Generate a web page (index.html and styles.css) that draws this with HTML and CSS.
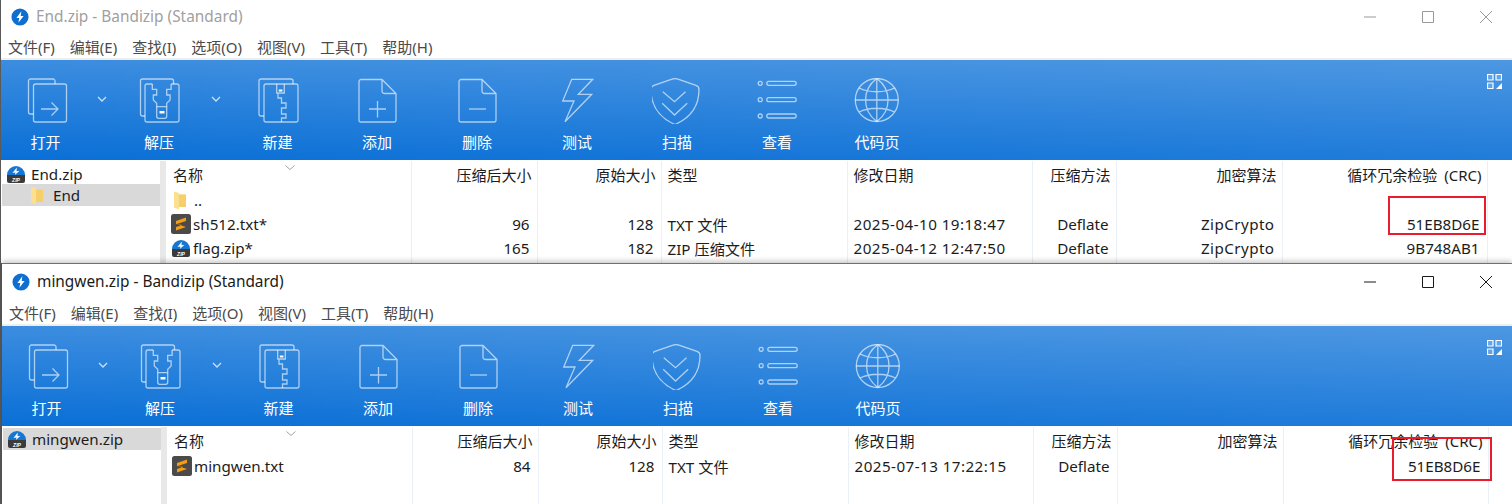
FILE: index.html
```html
<!DOCTYPE html>
<html lang="zh">
<head>
<meta charset="utf-8">
<title>Bandizip</title>
<link rel="stylesheet" href="styles.css">
</head>
<body>
<svg class="defs" xmlns="http://www.w3.org/2000/svg">
  <symbol id="i-app" viewBox="0 0 20 20"><circle cx="10" cy="10" r="9.500" fill="#0f6fd0"/><path d="M11.500 3.500 6 11h3.200l-1 5.500L14 9h-3.200z" fill="#fff"/></symbol>
  <symbol id="i-zip" viewBox="0 0 20 20"><path d="M1 11a9 9 0 0 1 18 0z" fill="#1677d2"/><path d="M10.800 3.500 6.500 9l3-.6-.6 2.600L13.500 6.800l-3 .5z" fill="#fff"/><path d="M1 11h18v6a2 2 0 0 1-2 2H3a2 2 0 0 1-2-2z" fill="#3b3b3b"/><text x="10" y="17.500" class="ziptext">ZIP</text></symbol>
  <symbol id="i-sub" viewBox="0 0 20 20"><rect width="20" height="20" rx="2.500" fill="#4a4a4a"/><path d="M15 3.600v3.300L5 10.200V7z" fill="#f59d12"/><path d="M5 9.800 15 13 5 16.400v-3.300l6-2z" fill="#f59d12"/></symbol>
  <symbol id="i-folder" viewBox="0 0 14 20"><path d="M1 1.500 6 3v1.500h7V17H6v2.500L1 17.500z" fill="#fbe08f"/><path d="M6 4.500h7V17H6z" fill="#f6cf6c"/></symbol>

  <symbol id="t-open" viewBox="0 0 50 46"><path d="M34 6V3a2 2 0 0 0-2-2H9.500a2 2 0 0 0-2 2v31a2 2 0 0 0 2 2h3"/><rect x="12.500" y="6" width="33" height="38" rx="2"/><path d="M20 31h17M30.500 24.500 37 31l-6.500 6.500"/></symbol>
  <symbol id="t-extract" viewBox="0 0 50 46"><path d="M11 38H8.500a2 2 0 0 1-2-2V3a2 2 0 0 1 2-2h29a2 2 0 0 1 2 2v3"/><path d="M18.300 6H13a2 2 0 0 0-2 2v34a2 2 0 0 0 2 2h30a2 2 0 0 0 2-2V8a2 2 0 0 0-2-2h-5.900"/><path d="M18.300 6v5.300h4.400V17h-3.400v5l3.400 3.300v3.400h10v-3.400l3.400-3.300v-5h-3.400v-5.700h4.400V6"/><path d="M22.700 28.700v9.600a2 2 0 0 0 2 2h6a2 2 0 0 0 2-2v-9.600"/><rect x="25.500" y="33" width="5" height="2.500" fill="#fff" stroke="none"/></symbol>
  <symbol id="t-new" viewBox="0 0 50 46"><path d="M11 38H8a2 2 0 0 1-2-2V3a2 2 0 0 1 2-2h30a2 2 0 0 1 2 2v3"/><path d="M11 42V8a2 2 0 0 1 2-2h30a2 2 0 0 1 2 2v34a2 2 0 0 1-2 2H13a2 2 0 0 1-2-2z"/><path d="M23.700 6v9h7.600V6M25 15v5h3.500v5H33v5h-4.500v6H33v4h-4.500v4"/><rect x="25.800" y="11.500" width="3.600" height="2" fill="#fff" stroke="none"/></symbol>
  <symbol id="t-add" viewBox="0 0 50 46"><path d="M30 1.500H9a2 2 0 0 0-2 2v38.500a2 2 0 0 0 2 2h33a2 2 0 0 0 2-2V15.500zM30 1.500V13a2.500 2.500 0 0 0 2.500 2.500H44"/><path d="M25.500 23v16.500M17 31h17"/></symbol>
  <symbol id="t-del" viewBox="0 0 50 46"><path d="M30 1.500H9a2 2 0 0 0-2 2v38.500a2 2 0 0 0 2 2h33a2 2 0 0 0 2-2V15.500zM30 1.500V13a2.500 2.500 0 0 0 2.500 2.500H44"/><path d="M17 31h17"/></symbol>
  <symbol id="t-test" viewBox="0 0 50 46"><path d="M19.700 1.300H40.700L26.300 16.300H39.700L13 43.700 22 23H10.700z"/></symbol>
  <symbol id="t-scan" viewBox="0 0 50 46"><path d="M23 .6c-1 0-2 .2-3 .6L2 7.400C-.2 8.200-1 9.500-1 11.500-1 28 8 40 23 46.500 38 40 47 28 47 11.500c0-2-.8-3.300-3-4.100L26 1.200c-1-.4-2-.6-3-.6z"/><path d="M10.800 13.700 22.500 23.700 33.500 13.700M10.200 25.300 22.500 37 35.200 25.300"/></symbol>
  <symbol id="t-view" viewBox="0 0 50 46"><circle cx="8.200" cy="5.300" r="2"/><circle cx="8.200" cy="21.700" r="2"/><circle cx="8.200" cy="38" r="2"/><rect x="14.800" y="3.300" width="29.400" height="4" rx="2"/><rect x="14.800" y="19.700" width="29.400" height="4" rx="2"/><rect x="14.800" y="36" width="29.400" height="4" rx="2"/></symbol>
  <symbol id="t-code" viewBox="0 0 50 46"><circle cx="24.800" cy="22" r="21.500"/><path d="M24.800.5v43M3.300 22h43M24.800.5c-15 11-15 32 0 43M24.800.5c15 11 15 32 0 43M7 10c10 5 25.600 5 35.600 0M7 34c10-5 25.600-5 35.600 0"/></symbol>
  <symbol id="t-apps" viewBox="0 0 15 15"><path d="M.5.500h5.500v5.500H.5zM9 .500h5.500v5.500H9zM.5 9h5.500v5.500H.5z" fill="rgba(120,190,255,.45)"/><path d="M15 9v6H9z" fill="#fff" stroke="none"/></symbol>
</svg>

<section class="window window-back">
  <header class="titlebar">
    <svg class="app-icon"><use href="#i-app"/></svg>
    <span class="title">End.zip - Bandizip (Standard)</span>
    <div class="controls">
      <svg class="ctl" viewBox="0 0 12 12"><path d="M0 6h12"/></svg>
      <svg class="ctl" viewBox="0 0 12 12"><path d="M.5.500h11v11H.5z"/></svg>
      <svg class="ctl" viewBox="0 0 12 12"><path d="M0 0l12 12M12 0 0 12"/></svg>
    </div>
  </header>
  <nav class="menu"><span>文件(F)</span><span>编辑(E)</span><span>查找(I)</span><span>选项(O)</span><span>视图(V)</span><span>工具(T)</span><span>帮助(H)</span></nav>
  <div class="toolbar">
    <div class="tool tool-open"><svg class="tool-icon"><use href="#t-open"/></svg><span>打开</span></div>
    <div class="drop"><svg viewBox="0 0 10 6"><path d="M1 1l4 4 4-4"/></svg></div>
    <div class="tool tool-extract"><svg class="tool-icon"><use href="#t-extract"/></svg><span>解压</span></div>
    <div class="drop"><svg viewBox="0 0 10 6"><path d="M1 1l4 4 4-4"/></svg></div>
    <div class="tool tool-new"><svg class="tool-icon"><use href="#t-new"/></svg><span>新建</span></div>
    <div class="tool"><svg class="tool-icon"><use href="#t-add"/></svg><span>添加</span></div>
    <div class="tool"><svg class="tool-icon"><use href="#t-del"/></svg><span>删除</span></div>
    <div class="tool"><svg class="tool-icon"><use href="#t-test"/></svg><span>测试</span></div>
    <div class="tool"><svg class="tool-icon"><use href="#t-scan"/></svg><span>扫描</span></div>
    <div class="tool"><svg class="tool-icon"><use href="#t-view"/></svg><span>查看</span></div>
    <div class="tool"><svg class="tool-icon"><use href="#t-code"/></svg><span>代码页</span></div>
    <svg class="apps"><use href="#t-apps"/></svg>
  </div>
  <div class="body">
    <aside class="tree">
      <div class="node"><svg class="file-icon"><use href="#i-zip"/></svg><span>End.zip</span></div>
      <div class="node node-sel node-child"><svg class="folder-icon"><use href="#i-folder"/></svg><span>End</span></div>
    </aside>
    <div class="splitter"></div>
    <div class="list">
      <svg class="sort" viewBox="0 0 10 5"><path d="M.5.500 5 4.500 9.500.500"/></svg>
      <table>
        <colgroup><col class="c1"><col class="c2"><col class="c3"><col class="c4"><col class="c5"><col class="c6"><col class="c7"><col class="c8"><col></colgroup>
        <thead><tr><th class="l name-h">名称</th><th>压缩后大小</th><th>原始大小</th><th class="l">类型</th><th class="l">修改日期</th><th>压缩方法</th><th>加密算法</th><th>循环冗余检验 (CRC)</th><th></th></tr></thead>
        <tbody>
          <tr><td class="l"><span class="fname"><svg class="folder-icon in-list"><use href="#i-folder"/></svg>..</span></td><td></td><td></td><td></td><td></td><td></td><td></td><td></td><td></td></tr>
          <tr><td class="l"><span class="fname"><svg class="file-icon"><use href="#i-sub"/></svg>sh512.txt*</span></td><td>96</td><td>128</td><td class="l">TXT 文件</td><td class="l date">2025-04-10 19:18:47</td><td>Deflate</td><td class="crypto">ZipCrypto</td><td>51EB8D6E</td><td></td></tr>
          <tr><td class="l"><span class="fname"><svg class="file-icon"><use href="#i-zip"/></svg>flag.zip*</span></td><td>165</td><td>182</td><td class="l">ZIP 压缩文件</td><td class="l date">2025-04-12 12:47:50</td><td>Deflate</td><td class="crypto">ZipCrypto</td><td>9B748AB1</td><td></td></tr>
          <tr class="filler"><td></td><td></td><td></td><td></td><td></td><td></td><td></td><td></td><td></td></tr>
        </tbody>
      </table>
      <div class="mark mark-back"></div>
    </div>
  </div>
</section>

<section class="window window-front">
  <header class="titlebar">
    <svg class="app-icon"><use href="#i-app"/></svg>
    <span class="title">mingwen.zip - Bandizip (Standard)</span>
    <div class="controls">
      <svg class="ctl" viewBox="0 0 12 12"><path d="M0 6h12"/></svg>
      <svg class="ctl" viewBox="0 0 12 12"><path d="M.5.500h11v11H.5z"/></svg>
      <svg class="ctl" viewBox="0 0 12 12"><path d="M0 0l12 12M12 0 0 12"/></svg>
    </div>
  </header>
  <nav class="menu"><span>文件(F)</span><span>编辑(E)</span><span>查找(I)</span><span>选项(O)</span><span>视图(V)</span><span>工具(T)</span><span>帮助(H)</span></nav>
  <div class="toolbar">
    <div class="tool tool-open"><svg class="tool-icon"><use href="#t-open"/></svg><span>打开</span></div>
    <div class="drop"><svg viewBox="0 0 10 6"><path d="M1 1l4 4 4-4"/></svg></div>
    <div class="tool tool-extract"><svg class="tool-icon"><use href="#t-extract"/></svg><span>解压</span></div>
    <div class="drop"><svg viewBox="0 0 10 6"><path d="M1 1l4 4 4-4"/></svg></div>
    <div class="tool tool-new"><svg class="tool-icon"><use href="#t-new"/></svg><span>新建</span></div>
    <div class="tool"><svg class="tool-icon"><use href="#t-add"/></svg><span>添加</span></div>
    <div class="tool"><svg class="tool-icon"><use href="#t-del"/></svg><span>删除</span></div>
    <div class="tool"><svg class="tool-icon"><use href="#t-test"/></svg><span>测试</span></div>
    <div class="tool"><svg class="tool-icon"><use href="#t-scan"/></svg><span>扫描</span></div>
    <div class="tool"><svg class="tool-icon"><use href="#t-view"/></svg><span>查看</span></div>
    <div class="tool"><svg class="tool-icon"><use href="#t-code"/></svg><span>代码页</span></div>
    <svg class="apps"><use href="#t-apps"/></svg>
  </div>
  <div class="body">
    <aside class="tree">
      <div class="node node-sel"><svg class="file-icon"><use href="#i-zip"/></svg><span>mingwen.zip</span></div>
    </aside>
    <div class="splitter"></div>
    <div class="list">
      <svg class="sort" viewBox="0 0 10 5"><path d="M.5.500 5 4.500 9.500.500"/></svg>
      <table>
        <colgroup><col class="c1"><col class="c2"><col class="c3"><col class="c4"><col class="c5"><col class="c6"><col class="c7"><col class="c8"><col></colgroup>
        <thead><tr><th class="l name-h">名称</th><th>压缩后大小</th><th>原始大小</th><th class="l">类型</th><th class="l">修改日期</th><th>压缩方法</th><th>加密算法</th><th>循环冗余检验 (CRC)</th><th></th></tr></thead>
        <tbody>
          <tr><td class="l"><span class="fname"><svg class="file-icon"><use href="#i-sub"/></svg>mingwen.txt</span></td><td>84</td><td>128</td><td class="l">TXT 文件</td><td class="l date">2025-07-13 17:22:15</td><td>Deflate</td><td></td><td>51EB8D6E</td><td></td></tr>
          <tr class="filler"><td></td><td></td><td></td><td></td><td></td><td></td><td></td><td></td><td></td></tr>
        </tbody>
      </table>
      <div class="mark mark-front"></div>
    </div>
  </div>
</section>
</body>
</html>
```
FILE: styles.css
```css
* { box-sizing: border-box; }
html, body { margin: 0; height: 504px; overflow: hidden; }
body {
  background: #5a5a5a;
  font-family: "Noto Sans", "Noto Sans CJK SC", sans-serif;
  font-size: 15.2px;
  color: #1c1c1c;
  width: 1512px;
}
.defs { display: none; }
.ziptext { font: italic 700 5px "Liberation Sans", sans-serif; fill: #fff; text-anchor: middle; }

.window { background: #fff; display: flex; flex-direction: column; position: relative; }
.window-back { height: 263px; margin-left: 1px; }
.window-front {
  height: 241px;
  margin-left: 2px;
  border-top: 1px solid #707070;
  box-shadow: 0 -2px 5px rgba(0, 0, 0, .22);
}

.titlebar { display: flex; align-items: center; height: 33px; padding-left: 10px; flex: none; }
.window-front .titlebar { height: 35px; }
.app-icon { width: 18px; height: 18px; flex: none; }
.title { margin-left: 7px; font-size: 15.4px; }
.window-back .title { color: #a0a0a0; }
.window-front .title { color: #1a1a1a; }
.controls { margin-left: auto; display: flex; gap: 46px; padding-right: 20px; align-items: center; }
.ctl { width: 12px; height: 12px; fill: none; stroke: #1a1a1a; stroke-width: 1; }
.window-back .ctl { stroke: #999; }

.menu { display: flex; gap: 15px; height: 27px; padding: 4px 0 0 7px; flex: none; font-size: 15px; color: #4a4a4a; border-bottom: 2px solid #eeeeee; line-height: 20px; }

.toolbar {
  display: flex;
  height: 100px;
  flex: none;
  color: #fff;
  background:
    linear-gradient(to right, rgba(255, 255, 255, 0), rgba(255, 255, 255, .09)),
    linear-gradient(180deg, #3c8ddf 0%, #0a6fd6 100%);
}
.tool { width: 100px; display: flex; flex-direction: column; align-items: center; padding-top: 18px; font-size: 15px; flex: none; }
.tool-open { width: 89px; }
.tool-extract { width: 90px; }
.tool-new { width: 99px; }
.tool span { margin-top: 8px; line-height: 20px; }
.tool-icon { width: 50px; height: 46px; fill: none; stroke: rgba(255, 255, 255, .62); stroke-width: 1.3; overflow: visible; }
.drop { width: 24px; flex: none; padding-top: 36px; display: flex; justify-content: center; }
.drop svg { width: 10px; height: 6px; fill: none; stroke: rgba(255, 255, 255, .75); stroke-width: 1.3; }
.apps { width: 15px; height: 15px; margin: 14px 10px 0 auto; fill: none; stroke: #fff; stroke-width: 1.2; flex: none; }

.body { display: flex; flex: 1; min-height: 0; padding-top: 1px; }
.tree { width: 159px; flex: none; }
.window-back .tree { padding-top: 2px; }
.window-front .tree { padding-top: 1px; }
.node { display: flex; align-items: center; height: 22px; padding-left: 4px; gap: 5px; }
.window-back .node:first-child { height: 21px; padding-left: 5px; }
.node-sel { background: #d9d9d9; margin-left: 1px; padding-left: 4px; }
.node-child { padding-left: 28px; gap: 9px; }
.file-icon { width: 20px; height: 20px; flex: none; }
.folder-icon { width: 14px; height: 20px; flex: none; }
.in-list { margin: 0 5px 0 2px; }
.splitter { width: 6px; background: #e8e8e8; flex: none; }

.list { flex: 1; position: relative; min-width: 0; }
.sort { position: absolute; left: 119px; top: 4px; width: 10px; height: 5px; fill: none; stroke: #888; stroke-width: .8; }
table { table-layout: fixed; border-collapse: collapse; width: 100%; height: 100%; }
.c1 { width: 245px; }
.c2 { width: 126px; }
.c3 { width: 124px; }
.c4 { width: 186px; }
.c5 { width: 185px; }
.c6 { width: 84px; }
.c7 { width: 166px; }
.c8 { width: 205px; }
th, td { border-right: 1px solid #eaf0f7; padding: 0 7px; text-align: right; white-space: nowrap; overflow: hidden; font-weight: 400; }
th { height: 27px; padding: 0 5px; font-size: 15px; word-spacing: 3px; }
td { height: 24px; }
th:last-child, td:last-child { border-right: 0; }
.filler td { height: auto; }
.l { text-align: left; }
th.l { padding-left: 6px; }
th.name-h { padding-left: 7px; }
td.l { padding-left: 6px; }
td.date { letter-spacing: .45px; }
td.crypto { letter-spacing: .45px; }
td:first-child { padding-left: 5px; }
.fname { display: flex; align-items: center; gap: 2px; height: 24px; }

.mark { position: absolute; border: 2px solid #e81c2c; pointer-events: none; }
.mark-back { left: 1222px; top: 35px; width: 98px; height: 39px; }
.mark-front { left: 1225px; top: 10px; width: 100px; height: 44px; }
```
